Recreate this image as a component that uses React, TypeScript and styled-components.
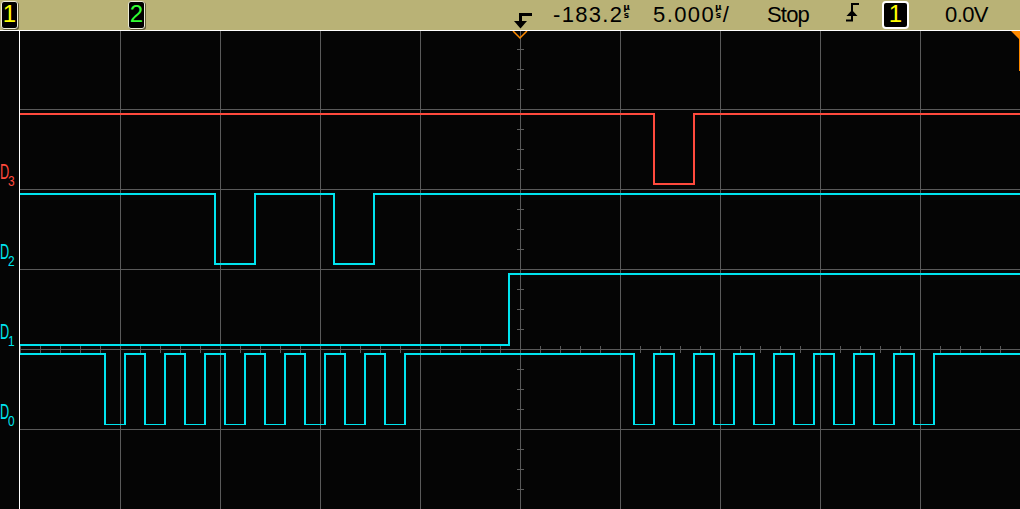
import React from "react";
import styled, { createGlobalStyle } from "styled-components";

const Global = createGlobalStyle`
  html, body { margin: 0; padding: 0; background: #050505; }
  body { width: 1020px; height: 509px; overflow: hidden; font-family: "Liberation Sans", Arial, sans-serif; }
`;

const Scope = styled.div`
  width: 1020px;
  height: 509px;
  display: flex;
  flex-direction: column;
  background: #050505;
`;

const StatusBar = styled.div`
  height: 30px;
  flex: 0 0 30px;
  display: flex;
  align-items: flex-start;
  background: #b9b276;
  border-bottom: 1px solid #ffffff;
  color: #000;
`;

const Field = styled.div<{ $w?: number; $pl?: number }>`
  display: flex;
  align-items: flex-start;
  flex: ${(p) => (p.$w ? `0 0 ${p.$w}px` : "1 1 auto")};
  padding-left: ${(p) => p.$pl ?? 0}px;
  box-sizing: border-box;
  height: 30px;
`;

const Chip = styled.div<{ $color: string; $outlined?: boolean }>`
  box-sizing: border-box;
  margin-top: 1px;
  width: ${(p) => (p.$outlined ? 27 : 17)}px;
  height: 28px;
  background: #000;
  border-radius: ${(p) => (p.$outlined ? 4 : 3)}px;
  border: ${(p) => (p.$outlined ? "2px solid #ffffff" : "1px solid #ecebd6")};
  box-shadow: ${(p) => (p.$outlined ? "none" : "1px 1px 0 #5f5a33")};
  color: ${(p) => p.$color};
  font: 24px/26px "Liberation Sans", Arial, sans-serif;
  display: flex;
  justify-content: center;
  align-items: center;
  padding-bottom: 2px;
`;

const Readout = styled.span<{ $ls?: number }>`
  font: 22px/30px "Liberation Sans", Arial, sans-serif;
  letter-spacing: ${(p) => p.$ls ?? 0}px;
  white-space: nowrap;
`;

const Unit = styled.span`
  display: inline-flex;
  flex-direction: column;
  align-items: center;
  margin: 3px 1px 0 0;
  font: bold 9px/8px "DejaVu Sans", sans-serif;
`;

const Icon = styled.svg<{ $mt: number }>`
  display: block;
  margin-top: ${(p) => p.$mt}px;
`;

const Screen = styled.div`
  flex: 1 1 auto;
  display: flex;
`;

const Gutter = styled.div`
  position: relative;
  width: 19px;
  flex: 0 0 19px;
  border-right: 1px solid #ffffff;
  background: #050505;
`;

const TraceLabel = styled.div<{ $color: string }>`
  position: absolute;
  left: 0;
  display: flex;
  align-items: flex-start;
  color: ${(p) => p.$color};
  font-family: "Liberation Sans", Arial, sans-serif;
`;

const Letter = styled.span`
  display: block;
  width: 8px;
  font-size: 22px;
  line-height: 16px;
  height: 16px;
  transform: scaleX(0.58);
  transform-origin: left top;
`;

const Sub = styled.span`
  display: block;
  margin-top: 12px;
  width: 6px;
  font-size: 14px;
  line-height: 10px;
  height: 10px;
  transform: scaleX(0.85);
  transform-origin: left top;
`;

const Graticule = styled.svg`
  display: block;
  flex: 0 0 1000px;
`;

const GRID = "#5a5a5a";
const ORANGE = "#ff8a00";
const CYAN = "#00e4ef";
const RED = "#ff4a3d";

type Trace = {
  name: string;
  sub: string;
  color: string;
  width: number;
  d: string;
  labelTop: number;
};

const pulses = (start: number, count: number, hi: number, lo: number) => {
  let s = "";
  for (let i = 0; i < count; i++) {
    const x = start + i * 40;
    s += ` H${x} V${lo} H${x + 20} V${hi}`;
  }
  return s;
};

const traces: Trace[] = [
  { name: "D", sub: "3", color: RED, width: 2, labelTop: 133, d: "M0 83 H634 V153 H674 V83 H1000" },
  { name: "D", sub: "2", color: CYAN, width: 2, labelTop: 213, d: "M0 163 H195 V233 H235 V163 H314 V233 H354 V163 H1000" },
  { name: "D", sub: "1", color: CYAN, width: 2, labelTop: 293, d: "M0 314 H489 V243 H1000" },
  {
    name: "D",
    sub: "0",
    color: CYAN,
    width: 1.5,
    labelTop: 373,
    d: "M0 323" + pulses(85, 8, 323, 393.5) + pulses(614, 8, 323, 393.5) + " H1000",
  },
];

const vLines = [100, 200, 300, 400, 500, 600, 700, 800, 900];
const hLines = [78, 158, 238, 318, 398];
const xTicks = Array.from({ length: 51 }, (_, i) => i * 20);
const yTicks = Array.from({ length: 24 }, (_, i) => 18 + i * 20);

export default function App() {
  return (
    <>
      <Global />
      <Scope>
        <StatusBar>
          <Field $w={128} $pl={1}>
            <Chip $color="#ffff00">1</Chip>
          </Field>
          <Field $w={384}>
            <Chip $color="#33ff33">2</Chip>
          </Field>
          <Field $w={41}>
            <Icon $mt={12} width="22" height="18" viewBox="0 0 22 18">
              <rect x="7" y="1" width="13" height="3" fill="#000" />
              <rect x="7" y="1" width="3" height="10" fill="#000" />
              <polygon points="2,9 15,9 8.5,16.5" fill="#000" />
            </Icon>
          </Field>
          <Field $w={100}>
            <Readout $ls={1.3}>-183.2</Readout>
            <Unit>
              <span>µ</span>
              <span>s</span>
            </Unit>
          </Field>
          <Field $w={114}>
            <Readout $ls={1.4}>5.000</Readout>
            <Unit>
              <span>µ</span>
              <span>s</span>
            </Unit>
            <Readout>/</Readout>
          </Field>
          <Field $w={79}>
            <Readout $ls={-0.8}>Stop</Readout>
          </Field>
          <Field $w={36}>
            <Icon $mt={3} width="14" height="19" viewBox="0 0 14 19">
              <path d="M0 17.5 H6 V1 H13" stroke="#000" strokeWidth="2" fill="none" />
              <polygon points="0.5,13 11.5,13 6,7" fill="#000" />
            </Icon>
          </Field>
          <Field $w={63}>
            <Chip $color="#ffff00" $outlined>
              1
            </Chip>
          </Field>
          <Field>
            <Readout $ls={-0.6}>0.0V</Readout>
          </Field>
        </StatusBar>
        <Screen>
          <Gutter>
            {traces.map((t) => (
              <TraceLabel key={t.sub} $color={t.color} style={{ top: t.labelTop }}>
                <Letter>{t.name}</Letter>
                <Sub>{t.sub}</Sub>
              </TraceLabel>
            ))}
          </Gutter>
          <Graticule width="1000" height="478" viewBox="0 0 1000 478">
            <g fill={GRID} shapeRendering="crispEdges">
              {vLines.map((x) => (
                <rect key={`v${x}`} x={x} y={0} width={1} height={478} />
              ))}
              {hLines.map((y) => (
                <rect key={`h${y}`} x={0} y={y} width={1000} height={1} />
              ))}
              {xTicks.map((x) => (
                <rect key={`xt${x}`} x={x} y={315} width={1} height={7} />
              ))}
              {yTicks.map((y) => (
                <rect key={`yt${y}`} x={497} y={y} width={7} height={1} />
              ))}
            </g>
            {traces.map((t) => (
              <path
                key={`p${t.sub}`}
                d={t.d}
                stroke={t.color}
                strokeWidth={t.width}
                fill="none"
                shapeRendering="crispEdges"
              />
            ))}
            <path d="M493 0 L500 7 L507 0" stroke={ORANGE} strokeWidth="1.5" fill="none" />
            <polygon points="991,0 1000,0 1000,9" fill={ORANGE} />
            <rect x="999" y="0" width="1" height="40" fill={ORANGE} />
          </Graticule>
        </Screen>
      </Scope>
    </>
  );
}
